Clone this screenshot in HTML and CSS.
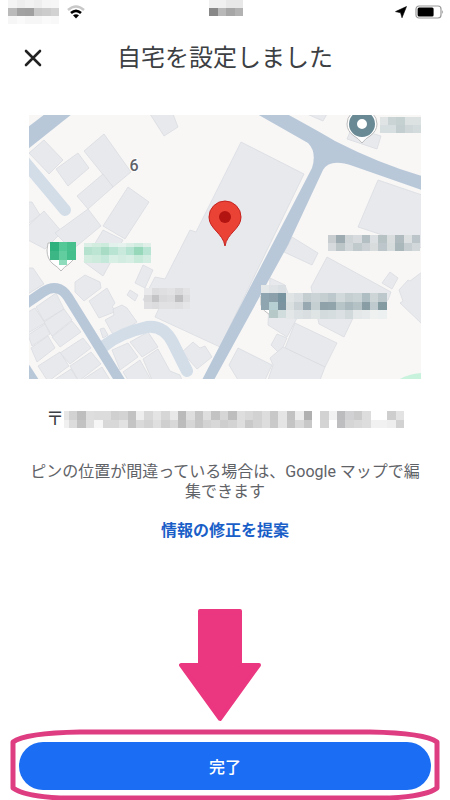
FILE: index.html
```html
<!DOCTYPE html>
<html lang="ja">
<head>
    <meta charset="UTF-8">
    <meta name="viewport" content="width=device-width, initial-scale=1.0">
    <title>自宅を設定しました</title>
    <link rel="stylesheet" href="styles.css">
</head>
<body>

    <div class="page">
        <div class="status">
            <div class="status-left">
                <svg class="carrier" viewBox="0 0 51 24" width="51" height="24" aria-hidden="true">
                    <g data-x="0" data-y="0" data-w="8.5" data-h="8" data-rows="f4f4f4 eeeeee f2f2f2 eeeeee f5f5f5 f6f6f6/bababa a2a2a2 a0a0a0 c8c8c8 cccccc d2d2d2/f6f6f6 fafafa f6f6f6 f6f6f6 fafafa f8f8f8"></g>
                </svg>
                <svg class="wifi" viewBox="0 0 18 14" width="18" height="14" aria-hidden="true">
                    <path d="M1 5Q9 -2 17 5" fill="none" stroke="#c8c8c8" stroke-width="2.4"/>
                    <path d="M4 8Q9 3.6 14 8" fill="none" stroke="#000" stroke-width="2.6"/>
                    <path d="M6 10.3Q9 8 12 10.3L9 13.5Z"/>
                </svg>
            </div>
            <svg class="clock" viewBox="0 0 34 24" width="34" height="24" aria-hidden="true">
                <g data-x="0" data-y="0" data-w="8.5" data-h="8" data-rows="f0f0f0 f0f0f0 e8e8e8 e8e8e8/888888 b8b8b8 a6a6a6 b2b2b2"></g>
            </svg>
            <div class="status-right">
                <svg class="location" viewBox="0 0 12 12" width="12" height="12" aria-hidden="true">
                    <path d="M11.5 0.5L7 11.8L5.6 6.8L0.5 5.6Z" stroke="#000" stroke-width="0.6"/>
                </svg>
                <svg class="battery" viewBox="0 0 29 14" width="29" height="14" aria-hidden="true">
                    <rect x="1" y="1" width="25" height="12" rx="3" fill="#fff" stroke="#999" stroke-width="1.2"/>
                    <rect x="2.6" y="2.6" width="16" height="8.8" rx="1.5"/>
                    <path d="M27.3 5V9Q29 7 27.3 5Z" fill="#888"/>
                </svg>
            </div>
        </div>

        <div class="header">
            <button class="close" type="button" aria-label="閉じる">
                <svg viewBox="0 0 18 18" width="18" height="18">
                    <path d="M2 2L16 16M16 2L2 16"/>
                </svg>
            </button>
            <h1>自宅を設定しました</h1>
        </div>

        <svg class="map" viewBox="29 115 392 264" role="img" aria-label="地図">
            <rect class="ground" x="29" y="115" width="392" height="264"/>

            <g class="building">
                <path d="M29 153L44 140L63 160L49 174Z"/>
                <path d="M56 169L78 153L89 168L68 186Z"/>
                <path d="M84 151L104 134L131 172L113 187Z"/>
                <path d="M77 196L103 174L113 187L88 209Z"/>
                <path d="M128 187L149 202L125 239L103 226Z"/>
                <path d="M28 202H32L40 215L28 224Z"/>
                <path d="M28 226L44 211L62 232L45 249L28 240Z"/>
                <path d="M55 233L88 209L101 226L72 250Z"/>
                <path d="M103 230L123 240L103 276L84 262Z"/>
                <path d="M150 114H173L178 127L164 136Z"/>
                <path d="M241 142L304 174L220 347L155 317L160 306L143 300L155 277L165 279L190 230L196 232Z"/>
                <path d="M307 114H327L323 121Z"/>
                <path d="M352 127L347 139L377 149L381 136Z"/>
                <path d="M422 195L378 180L358 227L422 248Z"/>
                <path d="M292 237L318 253L312 265L284 252Z"/>
                <path d="M327 257L391 292L388 300L353 318L344 337L319 324L311 287Z"/>
                <path d="M390 272L398 278L392 289L382 283Z"/>
                <path d="M422 272L410 281L408 280L399 290L403 301L400 303L422 324Z"/>
                <path d="M270 278L285 285L297 318L287 337L268 325Z"/>
                <path d="M277 334L287 338L283 347L278 352L271 345Z"/>
                <path d="M295 323L337 343L325 367L285 348Z"/>
                <path d="M283 347L325 367L320 380H268L273 365L270 358Z"/>
                <path d="M238 348L272 365L265 380H238L229 365Z"/>
                <path d="M28 268L33 268L44 284L28 294Z"/>
                <path d="M36 307L56 293L64 309L44 321Z"/>
                <path d="M44 322L64 309L72 320L52 336Z"/>
                <path d="M52 337L72 321L81 332L60 347Z"/>
                <path d="M60 353L83 338L91 348L70 364Z"/>
                <path d="M70 366L91 352L101 364L80 380H78Z"/>
                <path d="M82 380L102 367L110 380Z"/>
                <path d="M28 312L35 308L45 323L28 333Z"/>
                <path d="M28 335L45 324L50 334L32 346Z"/>
                <path d="M31 348L48 336L55 348L37 362Z"/>
                <path d="M38 366L60 352L69 366L50 380H47Z"/>
                <path d="M54 380L71 369L78 380Z"/>
                <path d="M112 350L128 343L138 357L120 370Z"/>
                <path d="M130 342L148 332L158 347L142 357Z"/>
                <path d="M123 372L140 360L151 380H128Z"/>
                <path d="M143 359L158 349L170 371L180 375L182 380H152Z"/>
                <path d="M75 282L85 275L100 282L101 288L84 301L75 292Z"/>
                <path d="M89 301L107 288L115 303L112 307L117 311L99 318Z"/>
                <path d="M105 320L114 315L113 309L122 305L127 308L137 322L117 335L112 333Z"/>
                <path d="M100 329L104 328L108 335L103 338Z"/>
                <path d="M143 265L153 270L145 288L135 283Z"/>
                <path d="M130 290L138 295L135 301L127 295Z"/>
                <path d="M182 352L193 342L200 348L205 346L212 357L197 369Z"/>
            </g>

            <g class="lane">
                <path d="M24 161L65 210"/>
                <path d="M104 346Q120 333 147 327Q164 325 173 343L187 371"/>
            </g>
            <g class="road">
                <path d="M28 127L45 114H72L28 149Z"/>
                <path d="M28 363L39 380H28Z"/>
                <path d="M257 114H287Q320 132 335 141Q380 164 422 176V190L353 166Q330 158 323 170L288 245L214 380H202L272 245L312 168Q317 152 308 143Z"/>
                <path class="bend" d="M24 305L43 292Q58 282 68 297L122 384"/>
            </g>
            <path class="park" d="M398 380Q408 374 422 373V380Z"/>

            <text class="lot" x="134" y="171">6</text>

            <path class="badge" d="M47 250Q47 259 53 264Q58 267 61 271Q64 267 69 264L75 258V243H48Z"/>
            <g data-x="50" data-y="242" data-w="8.5" data-h="9" data-rows="2fb17e 55c898 48c08d/3bb684 62cea0 45bf8c"></g>
            <g data-x="58.5" data-y="260" data-w="8.5" data-h="5" data-rows="8fdcbc"></g>
            <g data-x="84" data-y="243" data-w="8.4" data-h="4" data-rows="dcefe6 d2ecdf cdebdd e2f1eb e6f2ed dcefe6 d0ebdf e0f0e8"></g>
            <g data-x="84" data-y="247" data-w="8.4" data-h="8" data-rows="b4e2cf bce5d4 a8dcc5 b9e3d2 c8e9dc b5e3d1 98d8ba b8e5d3/d2ecdf cdebdd c4e8da d8efe5 d2ece1 d6eee4 c8eadb d4ede2"></g>

            <path class="badge" d="M347 124A15 15 0 0 1 377 124Q377 131 370 136Q366 138 362 143Q358 138 354 136Q347 131 347 124Z"/>
            <circle class="ring" cx="362" cy="124" r="9"/>
            <g data-x="380" data-y="117" data-w="8.2" data-h="8" data-rows="e1e4e5 cbd4d5 c5d0d1 dce1e2 dce2e2/d6dedf d6dedf c2cecf cfd7d8 d3dbdc"></g>

            <g data-x="328" data-y="235" data-w="8.4" data-h="8" data-rows="c8ced0 9eabb1 cfd5d7 d7dbdd b3bfc3 dde0e2 b7c2c5 d9ddde afbbbf dce0e1 bcc6ca/d6dadc bcc6c9 d2d8da c0c9cc cbd1d4 d8dcdd bdc7cb d6dbdc aab7bb c6ced1 d2d8da"></g>

            <path class="badge" d="M261 296V305Q263 311 270 315V296Z"/>
            <g data-x="261" data-y="285" data-w="8.3" data-h="8.3" data-rows="e5e8e9 dfe3e5 d9dfe2/8fa5af 8ba0aa 7894a0"></g>
            <g data-x="261" data-y="301.6" data-w="8.3" data-h="8.3" data-rows="8fa5af b5cfd2 7c949f"></g>
            <g data-x="269.3" data-y="309.9" data-w="8.3" data-h="8.3" data-rows="b7c8c9 d1dcdd"></g>
            <g data-x="286" data-y="293" data-w="8.4" data-h="8.5" data-rows="e0e4e5 d9dfe0 c4cdd0 cbd3d6 c5cfd2 bdc8cc d2d9da c5ced1 c9d2d4 afbec2 cdd5d7 bdc8cc/dadfe0 cbd2d5 99a9b1 c5cfd2 8fa2aa 91a4ab b7c4c8 aab9be b4c2c5 899da5 becacd 849ba2/e3e7e8 dce1e3 d9dfe0 dfe4e5 d4dbdd d6dddf dbe1e2 d1d9db e4e8e9 e6eaeb eff0f0 edf0f0"></g>
            <g data-x="144" data-y="288" data-w="7.7" data-h="7" data-rows="e9e9eb dcdcdf dfdfe2 e2e2e5 d9d9dc e2e2e5/d9d9dc c4c4c7 d9d9dc dcdcdf bfbfc2 dcdcdf/dfdfe2 dcdcdf e1e1e4 e1e1e4 dfdfe2 e5e5e8"></g>

            <path class="pin" d="M225 246C223 233 209 229 209 217A16 16 0 0 1 241 217C241 229 227 233 225 246Z"/>
            <circle class="pin-dot" cx="225" cy="217" r="6"/>
        </svg>

        <div class="address">
            <span>〒</span>
            <svg viewBox="0 0 340 17" width="340" height="17" aria-hidden="true">
                <g data-x="0" data-y="0" data-w="5" data-h="8.5" data-rows="e6e6e6/f0f0f0"></g>
                <g data-x="5" data-y="0" data-w="8.375" data-h="8.5" data-rows="d2d2d2 bebebe dedede dcdcdc dcdcdc d0d0d0 d3d3d3 c2c2c2 eeeeee d8d8d8 e4e4e4 d6d6d6 e8e8e8 bababa dedede c5c5c5 dedede c3c3c3 d6d6d6 bebebe dedede d8d8d8 d2d2d2 dddddd c8c8c8 e5e5e5 c2c2c2 ececec b0b0b0 ffffff d2d2d2 f2f2f2 bcbcbf d1d1d3 cbcbcc dddddd ffffff ffffff cecece e3e3e3/dcdcdc c2c2c2 dfdfdf f6f6f6 d8d8d8 d8d8d8 e2e2e2 c4c4c4 dadada d3d3d3 dfdfdf cfcfcf d8d8d8 bcbcbc d6d6d6 c6c6c6 d3d3d3 d8d8d8 cecece d3d3d3 dedede c9c9c9 d3d3d3 dddddd c9c9c9 e4e4e4 c4c4c4 d9d9d9 c8c8c8 ffffff d4d4d4 ffffff bebec1 d5d5d6 d9d9d9 dddddd f1f1f1 f1f1f1 eeeeee d2d2d2"></g>
            </svg>
        </div>

        <p class="note">ピンの位置が間違っている場合は、Google マップで編集できます</p>
        <a class="suggest" href="#">情報の修正を提案</a>

        <div class="footer">
            <button class="done" type="button">完了</button>
            <svg class="marker" viewBox="0 600 450 200" aria-hidden="true">
                <path class="arrow" d="M200 611H240V665H259L220 719L181 665H200Z"/>
                <path class="frame" d="M80 732H370Q425 733 437 742V788Q427 796 390 798H60Q24 796 13 788V742Q25 733 80 732Z"/>
            </svg>
        </div>
    </div>

    <script src="mosaic.js"></script>
</body>
</html>
```
FILE: styles.css
```css
* {
    box-sizing: border-box;
}

body {
    margin: 0;
    background-color: #fff;
    color: #3c4043;
    font-family: Roboto, "Noto Sans CJK JP", sans-serif;
    font-size: 16px;
}

.page {
    display: flex;
    flex-direction: column;
    align-items: center;
    min-height: 100vh;
}

/* status bar */
.status {
    display: grid;
    grid-template-columns: 1fr auto 1fr;
    align-items: center;
    width: 100%;
    height: 24px;
    padding: 0 6px 0 8px;
}

.status-left,
.status-right {
    display: flex;
    align-items: center;
    gap: 8px;
}

.status-right {
    justify-content: flex-end;
}

/* header */
.header {
    display: grid;
    grid-template-columns: 34px 1fr 34px;
    align-items: center;
    width: 100%;
    height: 67px;
    padding: 0 16px;
}

.close {
    display: flex;
    justify-content: center;
    padding: 8px 0;
    background: none;
    border: none;
    cursor: pointer;
}

.close path {
    fill: none;
    stroke: #222;
    stroke-width: 2.6;
    stroke-linecap: round;
}

h1 {
    margin: 0;
    font-size: 24px;
    font-weight: 400;
    line-height: 32px;
    text-align: center;
}

/* map */
.map {
    display: block;
    width: calc(100% - 58px);
    margin-top: 24px;
}

.ground {
    fill: #f8f7f6;
}

.building {
    fill: #e7e9ed;
    stroke: #d9dce1;
    stroke-width: 0.8;
}

.lane {
    fill: none;
    stroke: #d3dde8;
    stroke-width: 12;
    stroke-linecap: round;
}

.road {
    fill: #b9c8d9;
}

.bend {
    fill: none;
    stroke: #b9c8d9;
    stroke-width: 10;
}

.park {
    fill: #c8f2dc;
}

.lot {
    fill: #5f6368;
    stroke: #fff;
    stroke-width: 2;
    paint-order: stroke;
    font-size: 16px;
    font-weight: 500;
    text-anchor: middle;
}

.badge {
    fill: #fff;
    stroke: #bdbdbd;
    stroke-width: 1;
}

.ring {
    fill: #fff;
    stroke: #698995;
    stroke-width: 8;
}

.pin {
    fill: #ea4335;
    stroke: #c5221f;
    stroke-width: 1;
}

.pin-dot {
    fill: #b31412;
}

/* text below the map */
.address {
    display: flex;
    align-items: center;
    margin-top: 28px;
    font-size: 18px;
    line-height: 24px;
}

.note {
    margin: 31px 0 0;
    padding: 0 24px;
    color: #5f6368;
    line-height: 20px;
    text-align: center;
}

.suggest {
    margin-top: 17px;
    color: #1a5fc8;
    font-weight: 700;
    line-height: 24px;
    text-decoration: none;
}

/* footer */
.footer {
    position: relative;
    width: 100%;
    margin-top: auto;
    padding: 0 19px 10px;
}

.done {
    display: block;
    width: 100%;
    height: 48px;
    background-color: #1b6ef3;
    color: #fff;
    border: none;
    border-radius: 24px;
    font-family: inherit;
    font-size: 16px;
    font-weight: 500;
    cursor: pointer;
}

.marker {
    position: absolute;
    left: 0;
    bottom: 0;
    width: 100%;
    pointer-events: none;
}

.arrow {
    fill: #eb3680;
    stroke: #eb3680;
    stroke-width: 4;
    stroke-linejoin: round;
}

.frame {
    fill: none;
    stroke: #df3d82;
    stroke-width: 5;
    stroke-linejoin: round;
}
```
FILE: mosaic.js
```js
// Fills every group that has data-rows with coloured blocks
document.querySelectorAll('g[data-rows]').forEach(group => {
    const x = Number(group.dataset.x);
    const y = Number(group.dataset.y);
    const w = Number(group.dataset.w);
    const h = Number(group.dataset.h);

    group.dataset.rows.split('/').forEach((row, r) => {
        row.split(' ').forEach((color, c) => {
            const rect = document.createElementNS('http://www.w3.org/2000/svg', 'rect');
            rect.setAttribute('x', x + c * w);
            rect.setAttribute('y', y + r * h);
            rect.setAttribute('width', w);
            rect.setAttribute('height', h);
            rect.setAttribute('fill', '#' + color);
            rect.setAttribute('shape-rendering', 'crispEdges');
            group.appendChild(rect);
        });
    });
});
```
